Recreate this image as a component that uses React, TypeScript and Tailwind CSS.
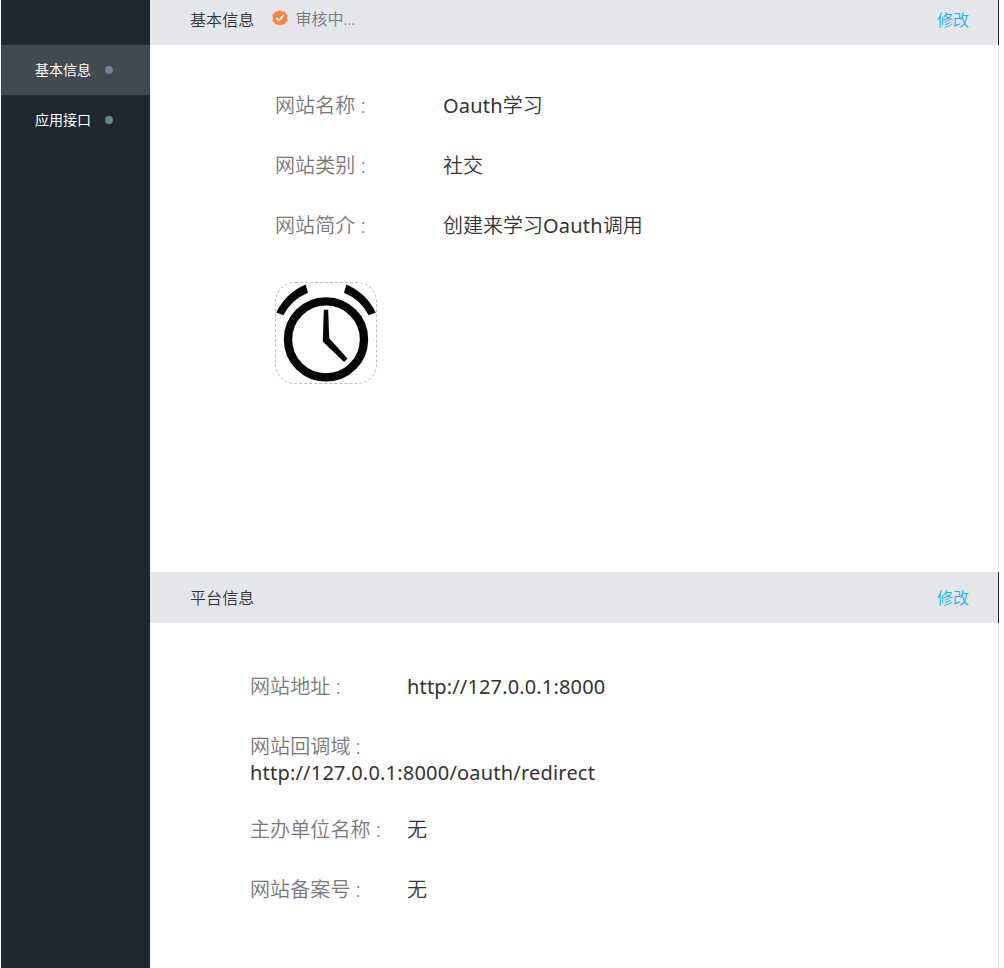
import React from "react";

type Field = { label: string; value: React.ReactNode };

function Latin({ children }: { children: React.ReactNode }) {
  return <span className="font-normal tracking-[0.2px]">{children}</span>;
}

const basicFields: Field[] = [
  { label: "网站名称 :", value: <><Latin>Oauth</Latin>学习</> },
  { label: "网站类别 :", value: "社交" },
  { label: "网站简介 :", value: <>创建来学习<Latin>Oauth</Latin>调用</> },
];

const menu = [
  { label: "基本信息", active: true },
  { label: "应用接口", active: false },
];

function VerifiedBadge() {
  return (
    <svg className="ml-[18px] mt-[10px] h-4 w-4" viewBox="0 0 16 16">
      <path
        d="M8 0.2 10.3 1.5 12.9 1.4 13.4 3.4 15.8 5.2 14.9 8 15.8 10.8 13.4 12.6 12.9 14.6 10.3 14.5 8 15.8 5.7 14.5 3.1 14.6 2.6 12.6 0.2 10.8 1.1 8 0.2 5.2 2.6 3.4 3.1 1.4 5.7 1.5Z"
        fill="#ff8340"
      />
      <path d="M4.4 8 7 10.5 11.8 4.8" fill="none" stroke="#fff" strokeWidth="1.8" />
    </svg>
  );
}

function AlarmClock() {
  return (
    <svg className="h-[100px] w-[100px]" viewBox="0 0 100 100">
      <circle cx="50" cy="56.4" r="38" fill="none" stroke="#050505" strokeWidth="8.4" />
      <path d="M0.3 29.5A57.5 57.5 0 0 1 29.7 1.5L32 9.8A49 49 0 0 0 7.3 32.3Z" fill="#050505" />
      <path d="M99.7 29.5A57.5 57.5 0 0 0 70.3 1.5L68 9.8A49 49 0 0 1 92.7 32.3Z" fill="#050505" />
      <path d="M47.8 26.7H52.2L53.2 55.3 71.5 75.4 68.1 78.9 48 59.7Q46.6 58.5 46.8 57Z" fill="#050505" />
    </svg>
  );
}

function SectionHeader({ title, className, children }: { title: string; className: string; children?: React.ReactNode }) {
  return (
    <header className={`flex w-[849px] shrink-0 items-start border-r border-[#1f272e] bg-[#e4e6ea] pl-10 pr-[29px] text-base leading-6 text-[#333] ${className}`}>
      <h2 className="font-[350] tracking-[0.1px]">{title}</h2>
      {children}
      <a className="ml-auto text-[#1ab2f5]">修改</a>
    </header>
  );
}

export default function App() {
  return (
    <div className="flex h-[968px] w-[1004px] overflow-hidden bg-white pl-px font-['Noto_Sans','Noto_Sans_CJK_SC',sans-serif] font-[350]">
      <nav className="w-[149px] shrink-0 bg-[#20282f] pt-[45px] text-sm font-normal text-white">
        {menu.map((item) => (
          <a
            key={item.label}
            className={`flex h-[50px] items-center pl-[34px] ${item.active ? "bg-[#42494f]" : ""}`}
          >
            <span>{item.label}</span>
            <i className="ml-[14px] h-2 w-2 rounded-full bg-[#6d8790]" />
          </a>
        ))}
      </nav>
      <main className="flex min-w-0 flex-1 flex-col bg-[#fcfcfc]">
        <SectionHeader title="基本信息" className="h-[45px] pt-2">
          <div className="-mt-2 flex">
            <VerifiedBadge />
            <span className="ml-[7px] mt-[7px] text-[#777]">审核中...</span>
          </div>
        </SectionHeader>
        <section className="h-[527px] w-[849px] shrink-0 border-r border-[#e7e7e7] bg-white pl-[125px] pt-[31px] text-xl">
          {basicFields.map((field) => (
            <div key={field.label} className="flex h-[60px] items-center">
              <span className="w-[168px] tracking-[0.1px] text-[#777]">{field.label}</span>
              <span className="text-[#333]">{field.value}</span>
            </div>
          ))}
          <div className="mt-[26px] h-[102px] w-[102px] overflow-hidden rounded-[20px] border border-dashed border-[#c0c0c0]">
            <AlarmClock />
          </div>
        </section>
        <SectionHeader title="平台信息" className="h-[51px] pt-[14px]" />
        <section className="w-[849px] flex-1 border-r border-[#e7e7e7] bg-white pl-[100px] pt-[34px] text-xl">
          <div className="flex h-[60px] items-center">
            <span className="w-[157px] tracking-[0.1px] text-[#777]">网站地址 :</span>
            <span className="font-normal tracking-[0.15px] text-[#333]">http://127.0.0.1:8000</span>
          </div>
          <div className="flex h-[83px] flex-col pt-[17px] leading-[26px]">
            <span className="tracking-[0.1px] text-[#777]">网站回调域 :</span>
            <span className="font-normal tracking-[0.2px] text-[#333]">http://127.0.0.1:8000/oauth/redirect</span>
          </div>
          <div className="flex h-[60px] items-center">
            <span className="w-[157px] tracking-[0.1px] text-[#777]">主办单位名称 :</span>
            <span className="text-[#333]">无</span>
          </div>
          <div className="flex h-[60px] items-center">
            <span className="w-[157px] tracking-[0.1px] text-[#777]">网站备案号 :</span>
            <span className="text-[#333]">无</span>
          </div>
        </section>
      </main>
    </div>
  );
}
